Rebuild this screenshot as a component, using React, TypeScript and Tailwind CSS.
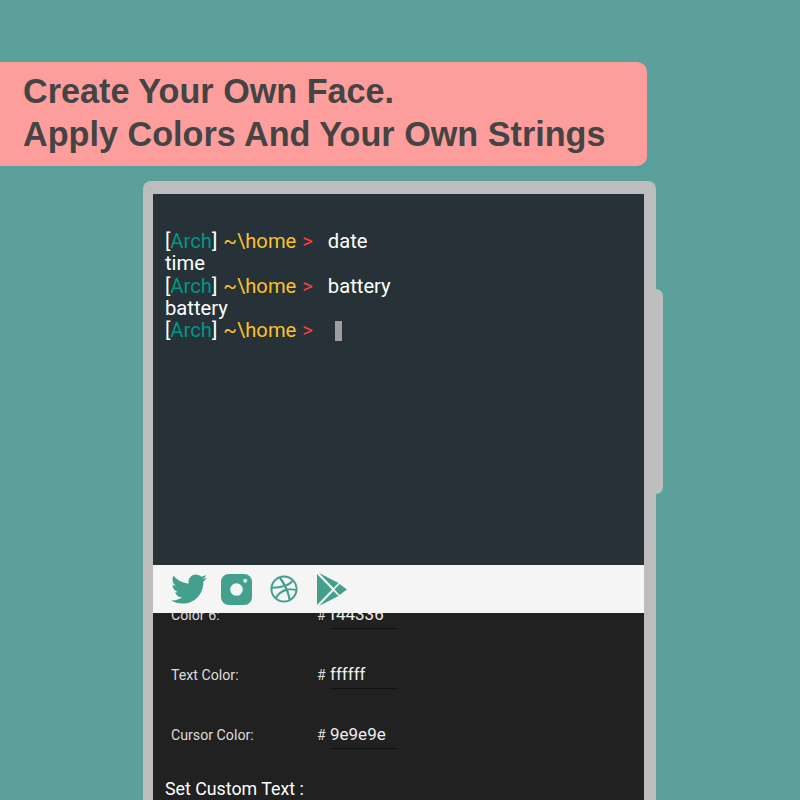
import { FaTwitter, FaDribbble } from "react-icons/fa";

const teal = "#43a08c";

const prompts = [
  { cmd: "date", output: "time" },
  { cmd: "battery", output: "battery" },
];

const colorRows = [
  { label: "Color 6:", value: "f44336", className: "-mt-[10px]" },
  { label: "Text Color:", value: "ffffff", className: "mt-[34px]" },
  { label: "Cursor Color:", value: "9e9e9e", className: "mt-[34px]" },
];

function Prompt({ children }: { children: React.ReactNode }) {
  return (
    <div className="flex">
      <span className="text-white">[</span>
      <span className="text-[#009688]">Arch</span>
      <span className="text-white">]</span>
      <span className="ml-[6px] text-[#fbc02d]">~\home</span>
      <span className="ml-[6px] text-[#f44336]">&gt;</span>
      {children}
    </div>
  );
}

function InstagramIcon() {
  return (
    <svg width="31" height="31" viewBox="0 0 32 32">
      <path
        fill={teal}
        fillRule="evenodd"
        d="M8 0h16a8 8 0 0 1 8 8v16a8 8 0 0 1-8 8H8a8 8 0 0 1-8-8V8a8 8 0 0 1 8-8zm8 9.500a6.500 6.500 0 1 0 0 13 6.500 6.500 0 0 0 0-13zM25 5a2 2 0 1 0 0 4 2 2 0 0 0 0-4z"
      />
    </svg>
  );
}

function PlayIcon() {
  return (
    <svg width="30" height="33" viewBox="0 0 30 33">
      <path fill={teal} d="M0 1l15 15.500L0 32z" />
      <path fill={teal} d="M2 0l14.500 15 5-5z" />
      <path fill={teal} d="M2 33l14.500-15 5 5z" />
      <path fill={teal} d="M22.500 11l7.500 5.500-7.500 5.500-5-5.500z" />
    </svg>
  );
}

export default function App() {
  return (
    <div className="h-[800px] overflow-hidden bg-[#5ba09b] pt-[62px] font-['Roboto',sans-serif]">
      {/* Banner */}
      <div className="h-[104px] w-[647px] rounded-r-[10px] bg-[#fe9e9c] pt-[8px] pl-[23px] font-['Liberation_Sans',sans-serif] text-[34.200px] leading-[43px] font-bold text-[#444444]">
        <div>Create Your Own Face.</div>
        <div>Apply Colors And Your Own Strings</div>
      </div>

      {/* Phone */}
      <div className="relative mt-[15px] ml-[143px] w-[513px] rounded-t-[8px] bg-[#bdbdbd] pt-[13px] pr-[12px] pl-[10px]">
        <div className="absolute top-[108px] left-full h-[205px] w-[7px] rounded-r-[7px] bg-[#bdbdbd]" />

        {/* Terminal */}
        <div className="h-[371px] bg-[#263238] pt-[36px] pl-[12px] text-[20.200px] leading-[22.300px] text-white">
          {prompts.map((p) => (
            <div key={p.cmd}>
              <Prompt>
                <span className="ml-[15px]">{p.cmd}</span>
              </Prompt>
              <div>{p.output}</div>
            </div>
          ))}
          <Prompt>
            <span className="mt-[2px] ml-[22px] h-[20px] w-[7px] bg-[#9e9e9e]" />
          </Prompt>
        </div>

        {/* Social links */}
        <div className="relative z-10 flex h-[48px] items-center bg-[#f5f5f5] pl-[18px]">
          <FaTwitter size={36} color={teal} />
          <div className="ml-[14px]">
            <InstagramIcon />
          </div>
          <div className="ml-[18px]">
            <FaDribbble size={28} color={teal} />
          </div>
          <div className="ml-[19px]">
            <PlayIcon />
          </div>
        </div>

        {/* Color settings */}
        <div className="h-[300px] bg-[#212121] text-[#dddddd]">
          {colorRows.map((row) => (
            <div key={row.label} className={`flex h-[26px] items-center pl-[18px] ${row.className}`}>
              <span className="w-[146px] pb-[3px] text-[14.200px] leading-[20px]">{row.label}</span>
              <span className="w-[13px] pb-[3px] text-[14px] leading-[20px]">#</span>
              <span className="h-[26px] w-[68px] border-b border-[#111111] text-[17px] leading-[22px] text-[#eeeeee]">
                {row.value}
              </span>
            </div>
          ))}
          <div className="mt-[28px] pl-[12px] text-[17.800px] leading-[24px] text-white">
            Set Custom Text :
          </div>
        </div>
      </div>
    </div>
  );
}
